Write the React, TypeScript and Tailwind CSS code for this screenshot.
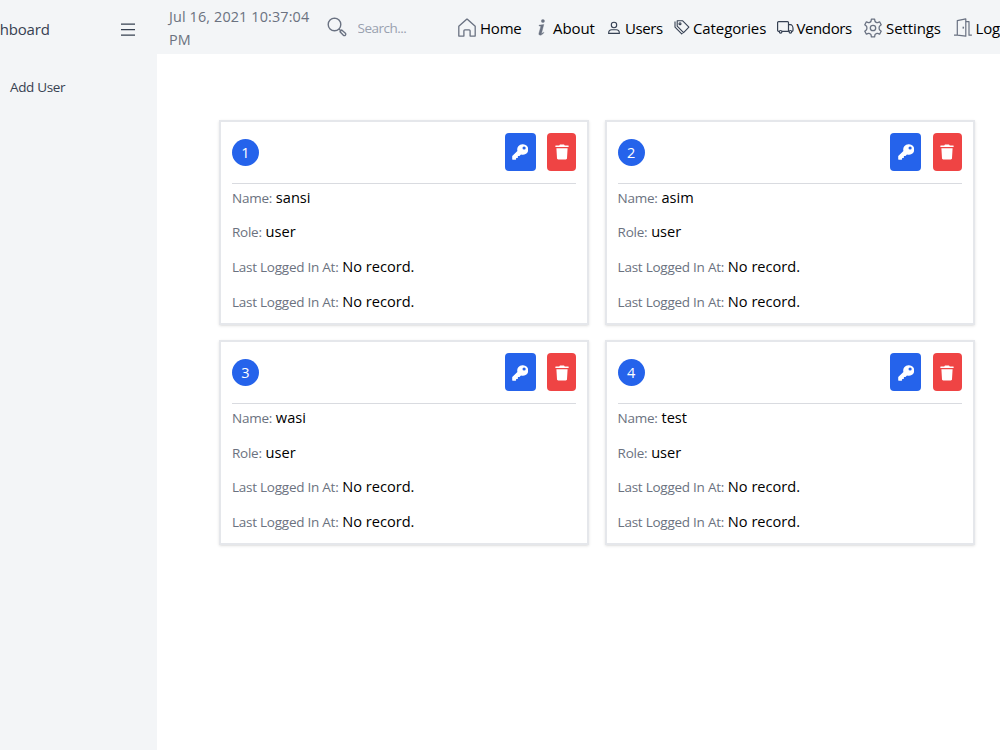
import type { ReactNode } from "react";

interface User {
  id: number;
  name: string;
  role: string;
}

interface NavLink {
  label: string;
  icon: ReactNode;
  className: string;
  iconClass: string;
  labelClass: string;
}

const users: User[] = [
  { id: 1, name: "sansi", role: "user" },
  { id: 2, name: "asim", role: "user" },
  { id: 3, name: "wasi", role: "user" },
  { id: 4, name: "test", role: "user" },
];

function SearchIcon() {
  return (
    <svg viewBox="0 0 20 20" className="h-5 w-5" fill="none" stroke="currentColor" strokeWidth="1.4">
      <circle cx="7.5" cy="7.5" r="6.3" />
      <path d="M12 12l1.800 1.800" />
      <path d="M13 14.700l1.700-1.700 3.700 3.300c1.200 1.100-.8 3.200-2 2z" strokeLinejoin="round" />
    </svg>
  );
}

function HomeIcon() {
  return (
    <svg viewBox="0 0 18 19" className="h-[19px] w-[18px]" fill="none" stroke="currentColor" strokeWidth="1.3" strokeLinejoin="round">
      <path d="M.8 8.2L9 .9l8.200 7.300v9.900h-5.100v-5.300c0-.7-.4-1-1-1H6.900c-.6 0-1 .3-1 1v5.300H.8z" />
    </svg>
  );
}

function InfoIcon() {
  return (
    <svg viewBox="0 0 8 17" className="h-[17px] w-2" fill="currentColor" stroke="currentColor" strokeWidth="0.4">
      <circle cx="4.900" cy="2" r="1.600" />
      <path d="M1 6.200l4.800-.8-2.200 8.500c-.2.900.5.700 1.900-.6l.4.400C4.400 15.500 3 16.300 1.800 16.100.9 15.900.7 15.200 1 14l1.700-6.100c.2-.8 0-1-1.700-1z" />
    </svg>
  );
}

function UserIcon() {
  return (
    <svg viewBox="0 0 12 14" className="h-3.5 w-3" fill="none" stroke="currentColor" strokeWidth="1.1" strokeLinejoin="round">
      <circle cx="6" cy="4" r="2.700" />
      <path d="M.6 12.400c0-2.400 1.300-3.600 3.200-3.600h4.400c1.900 0 3.200 1.200 3.200 3.600z" />
    </svg>
  );
}

function TagsIcon() {
  return (
    <svg viewBox="0 0 16 15" className="h-[15px] w-4" fill="none" stroke="currentColor" strokeWidth="1.1" strokeLinejoin="round">
      <path d="M3.200.8h5.500l6.200 6.300-5.300 5.500-6.400-6.400z" />
      <path d="M1 1.500v5.600l6.700 6.800.9-.8" />
      <circle cx="6" cy="3.700" r="1" />
    </svg>
  );
}

function TruckIcon() {
  return (
    <svg viewBox="0 0 17 13" className="h-[13px] w-[17px]" fill="none" stroke="currentColor" strokeWidth="1.2" strokeLinejoin="round">
      <path d="M2.300 10.300H1.600a1 1 0 0 1-1-1V1.600a1 1 0 0 1 1-1h8.900a1 1 0 0 1 1 1v8.700H5" />
      <path d="M11.500 3.600h1.900c1.400 0 2.600 2 2.600 3.800v1.900a1 1 0 0 1-1 1M11.500 10.300h.5" />
      <circle cx="3.600" cy="10.800" r="1.300" />
      <circle cx="13.400" cy="10.800" r="1.300" />
    </svg>
  );
}

function GearIcon() {
  return (
    <svg viewBox="0 0 18 20" className="h-5 w-[18px]" fill="none" stroke="currentColor" strokeWidth="1.3" strokeLinejoin="round">
      <path d="M7.400 1.200h3.200l.4 2.100q.2.700 1.300 1.100.7.400 1.300.2l2-.8 1.600 2.900-1.500 1.400q-.6.500-.6 1.900t.6 1.900l1.500 1.400-1.600 2.900-2-.8q-.6-.2-1.300.2-1.100.4-1.300 1.100l-.4 2.100H7.400L7 16.700q-.2-.7-1.300-1.100-.7-.4-1.300-.2l-2 .8-1.600-2.900 1.500-1.400q.6-.5.600-1.900t-.6-1.900L.8 6.700l1.600-2.900 2 .8q.6.200 1.300-.2Q6.800 4 7 3.300z" />
      <circle cx="9" cy="10" r="2.700" />
    </svg>
  );
}

function DoorIcon() {
  return (
    <svg viewBox="0 0 19 19" className="h-[19px] w-[19px]" fill="none" stroke="currentColor" strokeWidth="1.2" strokeLinejoin="round">
      <path d="M0 17.200h3.300V2.600l8.500-1.800v17.400l-8.500-1" />
      <path d="M11.800 3.700H15v13.500h2.900" />
      <path d="M9.300 8.700v1.900" strokeWidth="1.500" />
    </svg>
  );
}

function KeyIcon() {
  return (
    <svg viewBox="0 0 16 16" className="mt-px h-4 w-4" fill="currentColor">
      <path
        fillRule="evenodd"
        d="M10.500.2a5.300 5.300 0 0 0-5.100 6.700L.5 11.800a1 1 0 0 0-.3.700v2.400c0 .5.400.9.900.9h2.500c.3 0 .5-.2.500-.5v-1.400h1.300c.3 0 .5-.2.500-.5v-1.500h1.300c.2 0 .4-.1.500-.2l1.300-1.300A5.300 5.300 0 1 0 10.500.2zm1.600 2.200a1.600 1.600 0 1 1 0 3.200 1.600 1.600 0 0 1 0-3.200z"
      />
    </svg>
  );
}

function TrashIcon() {
  return (
    <svg viewBox="0 0 14 16" className="mt-px h-4 w-3.5" fill="currentColor">
      <path d="M.7 1.400h3.500L5 .4h4l.8 1h3.500c.5 0 .5 1.700 0 1.700H.7c-.5 0-.5-1.700 0-1.700z" />
      <path d="M1.400 4.200h11.200L12 14.300c0 .7-.5 1.200-1.200 1.200H3.200c-.7 0-1.200-.5-1.200-1.200z" />
    </svg>
  );
}

const links: NavLink[] = [
  {
    label: "Home",
    icon: <HomeIcon />,
    className: "w-20",
    iconClass: "w-[22px] pt-px text-gray-500",
    labelClass: "tracking-[-0.2px]",
  },
  {
    label: "About",
    icon: <InfoIcon />,
    className: "w-[69.5px]",
    iconClass: "w-[15px] text-gray-500",
    labelClass: "tracking-[-0.1px]",
  },
  {
    label: "Users",
    icon: <UserIcon />,
    className: "w-[66px]",
    iconClass: "w-[17.5px] pt-px text-gray-700",
    labelClass: "tracking-[-0.4px]",
  },
  {
    label: "Categories",
    icon: <TagsIcon />,
    className: "w-[103px]",
    iconClass: "w-[19.5px] text-gray-700",
    labelClass: "tracking-[-0.1px]",
  },
  {
    label: "Vendors",
    icon: <TruckIcon />,
    className: "w-[87px]",
    iconClass: "w-5 text-gray-700",
    labelClass: "tracking-[-0.4px]",
  },
  {
    label: "Settings",
    icon: <GearIcon />,
    className: "w-[90px]",
    iconClass: "w-[22.5px] pt-px text-gray-500",
    labelClass: "tracking-[-0.1px]",
  },
  {
    label: "Logout",
    icon: <DoorIcon />,
    className: "w-20",
    iconClass: "w-[22px] text-gray-500",
    labelClass: "tracking-[-0.2px]",
  },
];

function Sidebar() {
  return (
    <aside className="w-[157px] shrink-0 overflow-hidden bg-[#f3f5f7] text-[#374151]">
      <div className="flex h-[59px] items-center justify-between pr-[22px]">
        <span className="-ml-[26px] text-[15px] tracking-[-0.2px]">Dashboard</span>
        <svg viewBox="0 0 14 14" className="h-3.5 w-3.5" stroke="currentColor" strokeWidth="1.2">
          <path d="M0 1.200h14M0 6.700h14M0 12.200h14" />
        </svg>
      </div>
      <a className="mt-[18px] block pl-2.5 text-[13.5px] leading-5 tracking-[-0.35px]">Add User</a>
    </aside>
  );
}

function Header() {
  return (
    <header className="flex h-[54px] items-center overflow-hidden bg-[#f3f5f7] pl-3">
      <div className="w-[158px] shrink-0 pt-px text-[14.4px] leading-[23px] tracking-[0.13px] text-[#6b7280]">
        Jul 16, 2021 10:37:04
        <br />
        PM
      </div>
      <div className="flex w-[131px] shrink-0 items-center gap-[10.5px] text-gray-500">
        <SearchIcon />
        <input
          type="text"
          placeholder="Search..."
          className="mt-0.5 w-20 bg-transparent text-[13.5px] tracking-[-0.5px] outline-none placeholder:text-gray-400"
        />
      </div>
      <nav className="flex shrink-0 items-center">
        {links.map((link) => (
          <a key={link.label} className={`flex shrink-0 items-center ${link.className}`}>
            <span className={`shrink-0 ${link.iconClass}`}>{link.icon}</span>
            <span className={`pt-0.5 text-[15px] leading-6 text-black ${link.labelClass}`}>{link.label}</span>
          </a>
        ))}
      </nav>
    </header>
  );
}

function Field({ label, value }: { label: string; value: string }) {
  return (
    <p className="h-[34.6px] whitespace-nowrap text-[14.6px] leading-[27px] text-black">
      <span className="text-[13.5px] tracking-[-0.25px] text-[#6b7280]">{label}:</span> {value}
    </p>
  );
}

function UserCard({ user }: { user: User }) {
  return (
    <div className="h-[205px] border-2 border-[#e5e7eb] px-[11px] pt-[10.5px] shadow-sm">
      <div className="mb-[0.3px] flex h-[51px] items-start justify-between border-b border-[#d9dbe0]">
        <div className="mt-1.5 flex h-[27px] w-[27px] items-center justify-center rounded-full bg-[#2563eb] pt-px text-[14.5px] text-white">
          {user.id}
        </div>
        <div className="flex gap-[11.5px]">
          <button className="flex h-[38.5px] w-[31px] items-center justify-center rounded bg-[#2563eb] text-white">
            <KeyIcon />
          </button>
          <button className="flex h-[38.5px] w-[29px] items-center justify-center rounded bg-[#ef4444] text-white">
            <TrashIcon />
          </button>
        </div>
      </div>
      <Field label="Name" value={user.name} />
      <Field label="Role" value={user.role} />
      <Field label="Last Logged In At" value="No record." />
      <Field label="Last Logged In At" value="No record." />
    </div>
  );
}

export default function App() {
  return (
    <div className="flex h-[750px] w-[1000px] overflow-hidden bg-white font-['Open_Sans','Noto_Sans',sans-serif]">
      <Sidebar />
      <div className="min-w-0 flex-1">
        <Header />
        <main className="grid grid-cols-2 gap-x-[15.5px] gap-y-[15.4px] pt-[66px] pr-[25.3px] pl-[62px]">
          {users.map((user) => (
            <UserCard key={user.id} user={user} />
          ))}
        </main>
      </div>
    </div>
  );
}
